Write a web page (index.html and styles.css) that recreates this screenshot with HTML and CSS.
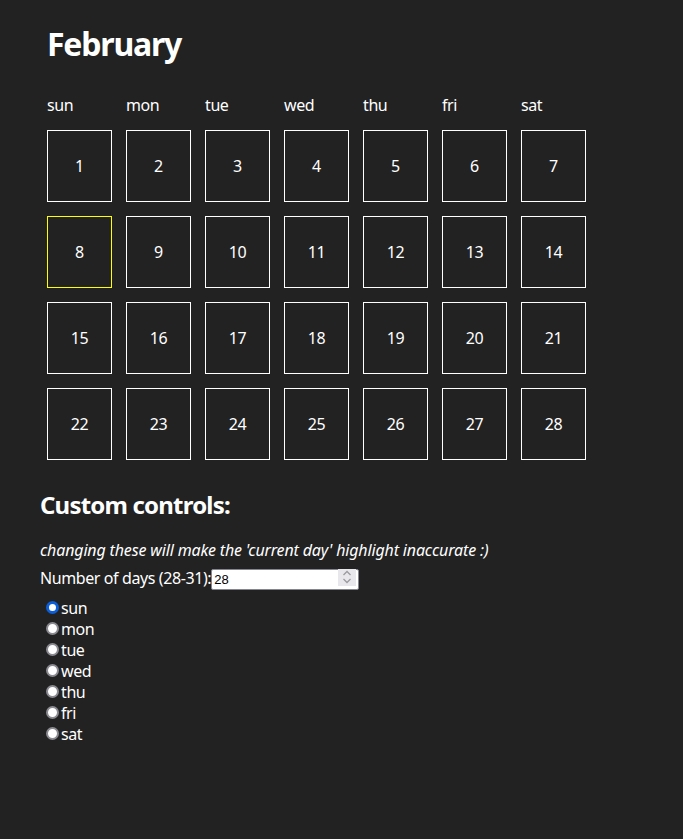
FILE: index.html
```html
<!DOCTYPE html>
<html>
<head>
<meta charset="utf-8">
<link rel="stylesheet" href="styles.css">
</head>
<body>
<main class="page">
  <section class="calendar">
    <h1 class="month">February</h1>
    <div class="grid">
      <div class="dayname">sun</div>
      <div class="dayname">mon</div>
      <div class="dayname">tue</div>
      <div class="dayname">wed</div>
      <div class="dayname">thu</div>
      <div class="dayname">fri</div>
      <div class="dayname">sat</div>
      <div class="day">1</div>
      <div class="day">2</div>
      <div class="day">3</div>
      <div class="day">4</div>
      <div class="day">5</div>
      <div class="day">6</div>
      <div class="day">7</div>
      <div class="day current">8</div>
      <div class="day">9</div>
      <div class="day">10</div>
      <div class="day">11</div>
      <div class="day">12</div>
      <div class="day">13</div>
      <div class="day">14</div>
      <div class="day">15</div>
      <div class="day">16</div>
      <div class="day">17</div>
      <div class="day">18</div>
      <div class="day">19</div>
      <div class="day">20</div>
      <div class="day">21</div>
      <div class="day">22</div>
      <div class="day">23</div>
      <div class="day">24</div>
      <div class="day">25</div>
      <div class="day">26</div>
      <div class="day">27</div>
      <div class="day">28</div>
    </div>
  </section>
  <section class="controls">
    <h2 class="controls-title">Custom controls:</h2>
    <p class="note">changing these will make the 'current day' highlight inaccurate :)</p>
    <div class="days-row">
      <label for="days" class="days-label">Number of days (28-31):</label>
      <span class="num-wrap">
        <input id="days" class="num" type="number" min="28" max="31" value="28">
        <span class="spin" aria-hidden="true">
          <svg width="10" height="14" viewBox="0 0 10 14"><path d="M1.5 5 L5 1.5 L8.5 5" fill="none" stroke="#9b9b9f" stroke-width="1.3"/><path d="M1.5 9 L5 12.5 L8.5 9" fill="none" stroke="#9b9b9f" stroke-width="1.3"/></svg>
        </span>
      </span>
    </div>
    <div class="radios">
      <label class="radio"><input type="radio" name="start" checked>sun</label>
      <label class="radio"><input type="radio" name="start">mon</label>
      <label class="radio"><input type="radio" name="start">tue</label>
      <label class="radio"><input type="radio" name="start">wed</label>
      <label class="radio"><input type="radio" name="start">thu</label>
      <label class="radio"><input type="radio" name="start">fri</label>
      <label class="radio"><input type="radio" name="start">sat</label>
    </div>
  </section>
</main>
</body>
</html>
```
FILE: styles.css
```css
html, body {
  margin: 0;
  padding: 0;
  background: #222222;
  color: #ffffff;
  font-family: "Noto Sans", "Open Sans", sans-serif;
  font-size: 16px;
  letter-spacing: -0.4px;
}
.page {
  padding: 20px 40px 40px 40px;
}
.calendar {
  padding-left: 7px;
}
.month {
  margin: 0 0 26px 0;
  font-size: 32px;
  font-weight: 700;
  line-height: 48px;
  letter-spacing: -1.2px;
}
.grid {
  display: grid;
  grid-template-columns: repeat(7, 65px);
  column-gap: 14px;
  row-gap: 14px;
}
.dayname {
  line-height: 22px;
}
.day {
  box-sizing: border-box;
  height: 72px;
  border: 1px solid #ffffff;
  display: flex;
  align-items: center;
  justify-content: center;
}
.day.current {
  border-color: #ffff00;
}
.controls {
  margin-top: 28px;
}
.controls-title {
  margin: 0 0 17px 0;
  font-size: 24px;
  font-weight: 700;
  line-height: 34px;
  letter-spacing: -0.8px;
}
.note {
  margin: 0 0 5px 0;
  font-style: italic;
  line-height: 22px;
  letter-spacing: -0.15px;
}
.days-row {
  display: flex;
  align-items: center;
  height: 24px;
}
.num-wrap {
  position: relative;
  display: inline-block;
  height: 21px;
  margin-top: -2px;
}
.num {
  box-sizing: border-box;
  width: 148px;
  height: 21px;
  font-size: 13px;
  letter-spacing: 0;
  font-family: "Liberation Sans", Arial, sans-serif;
  margin: 0;
  padding: 1px 2px;
  border: 1px solid #85858f;
  border-radius: 2px;
  background: #fff;
  color: #000;
  outline: none;
}
.spin {
  position: absolute;
  right: 3px;
  top: 2px;
  width: 18px;
  height: 17px;
  background: #e8e8ec;
  display: flex;
  align-items: center;
  justify-content: center;
}
.radios {
  margin-top: 7px;
  display: flex;
  flex-direction: column;
}
.radio {
  display: flex;
  align-items: center;
  height: 21px;
}
.radio input {
  appearance: none;
  -webkit-appearance: none;
  box-sizing: border-box;
  margin: 0 2px 0 6px;
  width: 13px;
  height: 13px;
  border-radius: 50%;
  border: 2px solid #8a8a90;
  background: #ffffff;
}
.radio input:checked {
  border: 3.5px solid #0b5ed7;
}
```
